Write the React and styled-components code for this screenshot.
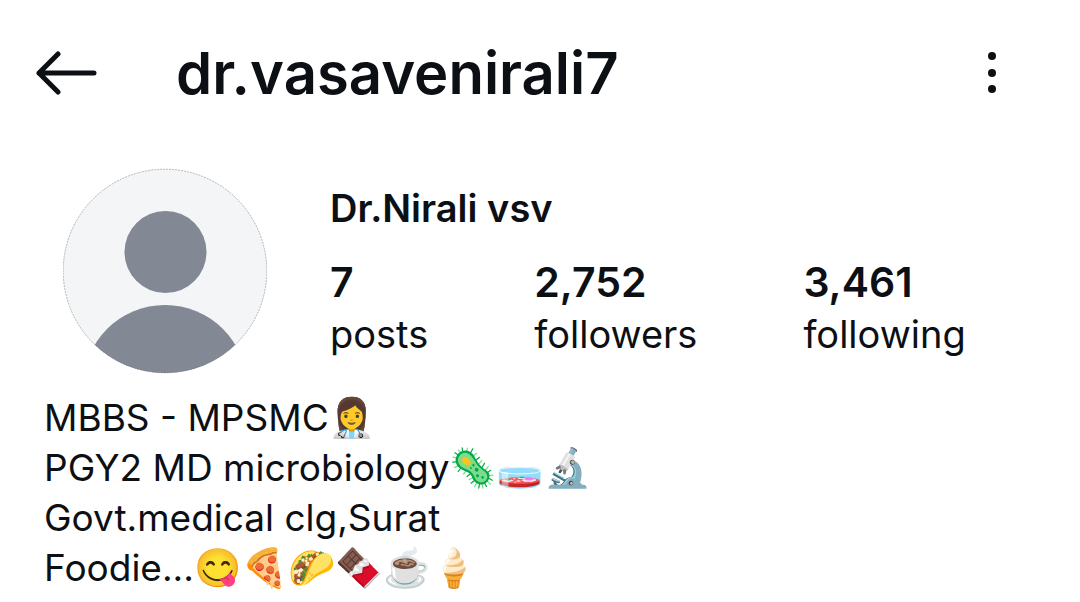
import React from 'react';
import styled, { createGlobalStyle } from 'styled-components';

const GlobalStyle = createGlobalStyle`
    body {
        margin: 0;
        background-color: #ffffff;
        color: #0c1014;
        font-family: Inter, Roboto, 'Noto Color Emoji', sans-serif;
    }
`;

const Header = styled.header`
    display: flex;
    align-items: center;
    height: 146px;
    padding: 0 64px 0 36px;
`;

const IconButton = styled.button`
    display: flex;
    padding: 0;
    border: 0;
    background: none;
    color: inherit;
    cursor: pointer;
`;

const Username = styled.h1`
    flex: 1;
    margin: 0 0 0 79px;
    font-size: 58px;
    line-height: 72px;
    font-weight: 600;
`;

const Summary = styled.section`
    display: flex;
    align-items: center;
    gap: 63px;
    padding: 22px 63px 0;
`;

const Avatar = styled.svg`
    flex: none;
    width: 204px;
    height: 206px;
`;

const DisplayName = styled.h2`
    margin: 2px 0 24px;
    font-size: 38px;
    line-height: 48px;
    font-weight: 600;
`;

const Stats = styled.ul`
    display: flex;
    gap: 106px;
    margin: 0;
    padding: 0;
    list-style: none;
`;

const Count = styled.strong`
    display: block;
    font-size: 41px;
    line-height: 52px;
    font-weight: 600;
`;

const Label = styled.span`
    display: block;
    font-size: 38px;
    line-height: 52px;
`;

const Bio = styled.section`
    padding: 19px 44px 0;
    font-size: 37px;
    line-height: 50px;
`;

const BioLine = styled.p`
    margin: 0;
`;

const Emoji = styled.span`
    font-size: 38px;
    line-height: 1;
`;

const stats = [
    { count: '7', label: 'posts' },
    { count: '2,752', label: 'followers' },
    { count: '3,461', label: 'following' },
];

const bio = [
    { text: 'MBBS - MPSMC', emoji: '👩‍⚕️' },
    { text: 'PGY2 MD microbiology', emoji: '🦠🧫🔬' },
    { text: 'Govt.medical clg,Surat' },
    { text: 'Foodie...', emoji: '😋🍕🌮🍫☕🍦' },
];

function App() {
    return (
        <>
            <GlobalStyle />
            <Header>
                <IconButton aria-label="Back">
                    <svg width="61" height="46" fill="none" stroke="currentColor" strokeWidth="5" strokeLinecap="round" strokeLinejoin="round">
                        <path d="M22 4 3 23l19 19M3 23h55" />
                    </svg>
                </IconButton>
                <Username>dr.vasavenirali7</Username>
                <IconButton aria-label="More options">
                    <svg width="48" height="48" fill="currentColor">
                        <circle cx="24" cy="7" r="4" />
                        <circle cx="24" cy="24" r="4" />
                        <circle cx="24" cy="40" r="4" />
                    </svg>
                </IconButton>
            </Header>
            <main>
                <Summary>
                    <Avatar viewBox="0 0 204 206" role="img" aria-label="Profile photo">
                        <clipPath id="avatar">
                            <circle cx="102" cy="103" r="102" />
                        </clipPath>
                        <g clipPath="url(#avatar)">
                            <rect width="204" height="206" fill="#f3f5f7" />
                            <circle cx="102.5" cy="84" r="41" fill="#828994" />
                            <circle cx="102" cy="219" r="82" fill="#828994" />
                        </g>
                        <circle cx="102" cy="103" r="101.8" fill="none" stroke="#55585c" strokeWidth="0.4" strokeDasharray="2 1" />
                    </Avatar>
                    <div>
                        <DisplayName>Dr.Nirali vsv</DisplayName>
                        <Stats>
                            {stats.map(({ count, label }) => (
                                <li key={label}>
                                    <Count>{count}</Count>
                                    <Label>{label}</Label>
                                </li>
                            ))}
                        </Stats>
                    </div>
                </Summary>
                <Bio>
                    {bio.map(({ text, emoji }) => (
                        <BioLine key={text}>
                            {text}
                            {emoji && <Emoji>{emoji}</Emoji>}
                        </BioLine>
                    ))}
                </Bio>
            </main>
        </>
    );
}

export default App;
